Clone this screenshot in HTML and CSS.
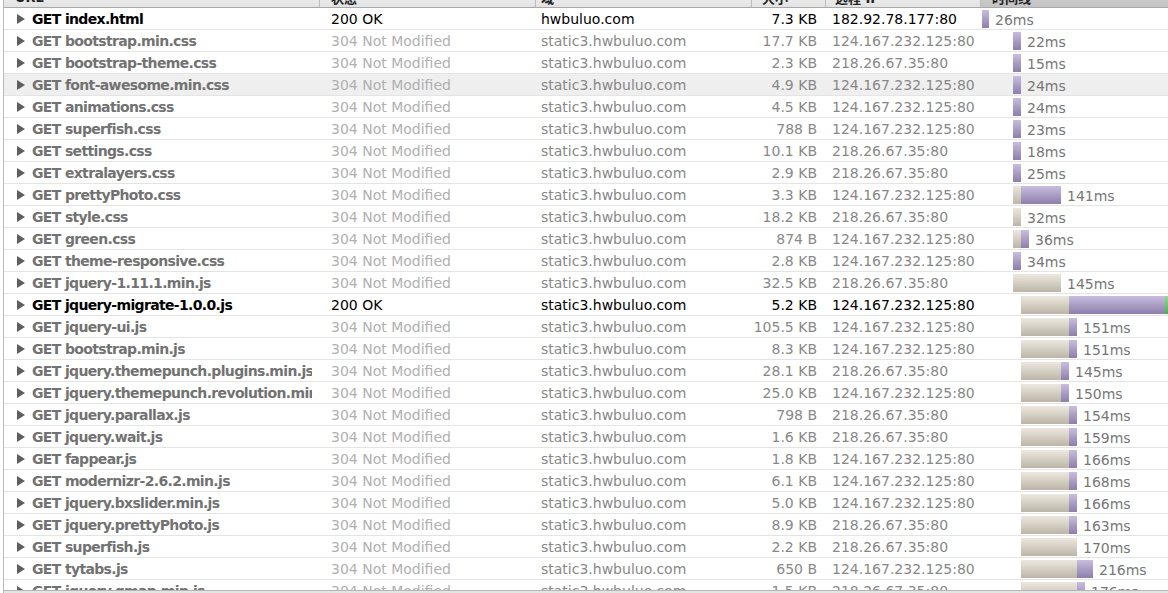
FILE: index.html
```html
<!DOCTYPE html>
<html lang="zh">
<head>
<meta charset="utf-8">
<title>网络</title>
<link rel="stylesheet" href="styles.css">
</head>
<body>
<div class="panel">
  <div class="head">
    <div class="hc h-url">URL</div>
    <div class="hc h-status">状态</div>
    <div class="hc h-domain">域</div>
    <div class="hc h-size">大小</div>
    <div class="hc h-ip">远程 IP</div>
    <div class="hc h-tl">时间线</div>
  </div>
  <div class="list">
    <div class="row main"><div class="url"><span class="tri"></span>GET index.html</div><div class="status">200 OK</div><div class="domain">hwbuluo.com</div><div class="size">7.3 KB</div><div class="ip">182.92.78.177:80</div><div class="tl"><span class="off" style="width:1px"></span><span class="bar p" style="width:7px"></span><span class="ms">26ms</span></div></div>
    <div class="row"><div class="url"><span class="tri"></span>GET bootstrap.min.css</div><div class="status">304 Not Modified</div><div class="domain">static3.hwbuluo.com</div><div class="size">17.7 KB</div><div class="ip">124.167.232.125:80</div><div class="tl"><span class="off" style="width:32px"></span><span class="bar p" style="width:8px"></span><span class="ms">22ms</span></div></div>
    <div class="row"><div class="url"><span class="tri"></span>GET bootstrap-theme.css</div><div class="status">304 Not Modified</div><div class="domain">static3.hwbuluo.com</div><div class="size">2.3 KB</div><div class="ip">218.26.67.35:80</div><div class="tl"><span class="off" style="width:32px"></span><span class="bar p" style="width:8px"></span><span class="ms">15ms</span></div></div>
    <div class="row hover"><div class="url"><span class="tri"></span>GET font-awesome.min.css</div><div class="status">304 Not Modified</div><div class="domain">static3.hwbuluo.com</div><div class="size">4.9 KB</div><div class="ip">124.167.232.125:80</div><div class="tl"><span class="off" style="width:32px"></span><span class="bar p" style="width:8px"></span><span class="ms">24ms</span></div></div>
    <div class="row"><div class="url"><span class="tri"></span>GET animations.css</div><div class="status">304 Not Modified</div><div class="domain">static3.hwbuluo.com</div><div class="size">4.5 KB</div><div class="ip">124.167.232.125:80</div><div class="tl"><span class="off" style="width:32px"></span><span class="bar p" style="width:8px"></span><span class="ms">24ms</span></div></div>
    <div class="row"><div class="url"><span class="tri"></span>GET superfish.css</div><div class="status">304 Not Modified</div><div class="domain">static3.hwbuluo.com</div><div class="size">788 B</div><div class="ip">124.167.232.125:80</div><div class="tl"><span class="off" style="width:32px"></span><span class="bar p" style="width:8px"></span><span class="ms">23ms</span></div></div>
    <div class="row"><div class="url"><span class="tri"></span>GET settings.css</div><div class="status">304 Not Modified</div><div class="domain">static3.hwbuluo.com</div><div class="size">10.1 KB</div><div class="ip">218.26.67.35:80</div><div class="tl"><span class="off" style="width:32px"></span><span class="bar p" style="width:8px"></span><span class="ms">18ms</span></div></div>
    <div class="row"><div class="url"><span class="tri"></span>GET extralayers.css</div><div class="status">304 Not Modified</div><div class="domain">static3.hwbuluo.com</div><div class="size">2.9 KB</div><div class="ip">218.26.67.35:80</div><div class="tl"><span class="off" style="width:32px"></span><span class="bar p" style="width:8px"></span><span class="ms">25ms</span></div></div>
    <div class="row"><div class="url"><span class="tri"></span>GET prettyPhoto.css</div><div class="status">304 Not Modified</div><div class="domain">static3.hwbuluo.com</div><div class="size">3.3 KB</div><div class="ip">124.167.232.125:80</div><div class="tl"><span class="off" style="width:32px"></span><span class="bar b" style="width:8px"></span><span class="bar p" style="width:40px"></span><span class="ms">141ms</span></div></div>
    <div class="row"><div class="url"><span class="tri"></span>GET style.css</div><div class="status">304 Not Modified</div><div class="domain">static3.hwbuluo.com</div><div class="size">18.2 KB</div><div class="ip">218.26.67.35:80</div><div class="tl"><span class="off" style="width:32px"></span><span class="bar b" style="width:8px"></span><span class="ms">32ms</span></div></div>
    <div class="row"><div class="url"><span class="tri"></span>GET green.css</div><div class="status">304 Not Modified</div><div class="domain">static3.hwbuluo.com</div><div class="size">874 B</div><div class="ip">124.167.232.125:80</div><div class="tl"><span class="off" style="width:32px"></span><span class="bar b" style="width:8px"></span><span class="bar p" style="width:8px"></span><span class="ms">36ms</span></div></div>
    <div class="row"><div class="url"><span class="tri"></span>GET theme-responsive.css</div><div class="status">304 Not Modified</div><div class="domain">static3.hwbuluo.com</div><div class="size">2.8 KB</div><div class="ip">124.167.232.125:80</div><div class="tl"><span class="off" style="width:32px"></span><span class="bar p" style="width:8px"></span><span class="ms">34ms</span></div></div>
    <div class="row"><div class="url"><span class="tri"></span>GET jquery-1.11.1.min.js</div><div class="status">304 Not Modified</div><div class="domain">static3.hwbuluo.com</div><div class="size">32.5 KB</div><div class="ip">218.26.67.35:80</div><div class="tl"><span class="off" style="width:32px"></span><span class="bar b" style="width:48px"></span><span class="ms">145ms</span></div></div>
    <div class="row main"><div class="url"><span class="tri"></span>GET jquery-migrate-1.0.0.js</div><div class="status">200 OK</div><div class="domain">static3.hwbuluo.com</div><div class="size">5.2 KB</div><div class="ip">124.167.232.125:80</div><div class="tl"><span class="off" style="width:40px"></span><span class="bar b" style="width:48px"></span><span class="bar p" style="width:96px"></span><span class="bar g" style="width:8px"></span></div></div>
    <div class="row"><div class="url"><span class="tri"></span>GET jquery-ui.js</div><div class="status">304 Not Modified</div><div class="domain">static3.hwbuluo.com</div><div class="size">105.5 KB</div><div class="ip">124.167.232.125:80</div><div class="tl"><span class="off" style="width:40px"></span><span class="bar b" style="width:48px"></span><span class="bar p" style="width:8px"></span><span class="ms">151ms</span></div></div>
    <div class="row"><div class="url"><span class="tri"></span>GET bootstrap.min.js</div><div class="status">304 Not Modified</div><div class="domain">static3.hwbuluo.com</div><div class="size">8.3 KB</div><div class="ip">124.167.232.125:80</div><div class="tl"><span class="off" style="width:40px"></span><span class="bar b" style="width:48px"></span><span class="bar p" style="width:8px"></span><span class="ms">151ms</span></div></div>
    <div class="row"><div class="url"><span class="tri"></span>GET jquery.themepunch.plugins.min.js</div><div class="status">304 Not Modified</div><div class="domain">static3.hwbuluo.com</div><div class="size">28.1 KB</div><div class="ip">218.26.67.35:80</div><div class="tl"><span class="off" style="width:40px"></span><span class="bar b" style="width:40px"></span><span class="bar p" style="width:8px"></span><span class="ms">145ms</span></div></div>
    <div class="row"><div class="url"><span class="tri"></span>GET jquery.themepunch.revolution.min.js</div><div class="status">304 Not Modified</div><div class="domain">static3.hwbuluo.com</div><div class="size">25.0 KB</div><div class="ip">124.167.232.125:80</div><div class="tl"><span class="off" style="width:40px"></span><span class="bar b" style="width:40px"></span><span class="bar p" style="width:8px"></span><span class="ms">150ms</span></div></div>
    <div class="row"><div class="url"><span class="tri"></span>GET jquery.parallax.js</div><div class="status">304 Not Modified</div><div class="domain">static3.hwbuluo.com</div><div class="size">798 B</div><div class="ip">218.26.67.35:80</div><div class="tl"><span class="off" style="width:40px"></span><span class="bar b" style="width:48px"></span><span class="bar p" style="width:8px"></span><span class="ms">154ms</span></div></div>
    <div class="row"><div class="url"><span class="tri"></span>GET jquery.wait.js</div><div class="status">304 Not Modified</div><div class="domain">static3.hwbuluo.com</div><div class="size">1.6 KB</div><div class="ip">218.26.67.35:80</div><div class="tl"><span class="off" style="width:40px"></span><span class="bar b" style="width:48px"></span><span class="bar p" style="width:8px"></span><span class="ms">159ms</span></div></div>
    <div class="row"><div class="url"><span class="tri"></span>GET fappear.js</div><div class="status">304 Not Modified</div><div class="domain">static3.hwbuluo.com</div><div class="size">1.8 KB</div><div class="ip">124.167.232.125:80</div><div class="tl"><span class="off" style="width:40px"></span><span class="bar b" style="width:48px"></span><span class="bar p" style="width:8px"></span><span class="ms">166ms</span></div></div>
    <div class="row"><div class="url"><span class="tri"></span>GET modernizr-2.6.2.min.js</div><div class="status">304 Not Modified</div><div class="domain">static3.hwbuluo.com</div><div class="size">6.1 KB</div><div class="ip">124.167.232.125:80</div><div class="tl"><span class="off" style="width:40px"></span><span class="bar b" style="width:48px"></span><span class="bar p" style="width:8px"></span><span class="ms">168ms</span></div></div>
    <div class="row"><div class="url"><span class="tri"></span>GET jquery.bxslider.min.js</div><div class="status">304 Not Modified</div><div class="domain">static3.hwbuluo.com</div><div class="size">5.0 KB</div><div class="ip">124.167.232.125:80</div><div class="tl"><span class="off" style="width:40px"></span><span class="bar b" style="width:48px"></span><span class="bar p" style="width:8px"></span><span class="ms">166ms</span></div></div>
    <div class="row"><div class="url"><span class="tri"></span>GET jquery.prettyPhoto.js</div><div class="status">304 Not Modified</div><div class="domain">static3.hwbuluo.com</div><div class="size">8.9 KB</div><div class="ip">218.26.67.35:80</div><div class="tl"><span class="off" style="width:40px"></span><span class="bar b" style="width:48px"></span><span class="bar p" style="width:8px"></span><span class="ms">163ms</span></div></div>
    <div class="row"><div class="url"><span class="tri"></span>GET superfish.js</div><div class="status">304 Not Modified</div><div class="domain">static3.hwbuluo.com</div><div class="size">2.2 KB</div><div class="ip">218.26.67.35:80</div><div class="tl"><span class="off" style="width:40px"></span><span class="bar b" style="width:56px"></span><span class="ms">170ms</span></div></div>
    <div class="row"><div class="url"><span class="tri"></span>GET tytabs.js</div><div class="status">304 Not Modified</div><div class="domain">static3.hwbuluo.com</div><div class="size">650 B</div><div class="ip">124.167.232.125:80</div><div class="tl"><span class="off" style="width:40px"></span><span class="bar b" style="width:56px"></span><span class="bar p" style="width:16px"></span><span class="ms">216ms</span></div></div>
    <div class="row"><div class="url"><span class="tri"></span>GET jquery.gmap.min.js</div><div class="status">304 Not Modified</div><div class="domain">static3.hwbuluo.com</div><div class="size">1.5 KB</div><div class="ip">218.26.67.35:80</div><div class="tl"><span class="off" style="width:40px"></span><span class="bar b" style="width:56px"></span><span class="bar p" style="width:8px"></span><span class="ms">176ms</span></div></div>
  </div>
  <div class="foot"></div>
</div>
</body>
</html>
```

FILE: styles.css
```css
html, body {
  margin: 0;
  padding: 0;
  background: #fff;
  overflow: hidden;
}

body {
  font-family: "DejaVu Sans", "Noto Sans CJK SC", sans-serif;
  font-size: 14px;
  color: #888;
}

.panel {
  display: flex;
  flex-direction: column;
  height: 607px;
  margin-top: -14px;
  margin-left: 3px;
  border-left: 1px solid #b9b9b9;
}

.head,
.row {
  display: grid;
  grid-template-columns: 316px 216px 216px 74px 155px 1fr;
}

.head {
  height: 21px;
  flex: none;
  border-bottom: 1px solid #a9a9a9;
  background: linear-gradient(#f4f4f4, #e3e3e3);
  font-size: 13px;
  font-weight: bold;
  color: #222;
}

.hc {
  display: flex;
  align-items: center;
  border-right: 1px solid #bdbdbd;
  white-space: nowrap;
  overflow: hidden;
  padding-top: 2px;
}

.h-url { padding-left: 11px; }
.h-status { padding-left: 11px; }
.h-domain { padding-left: 5px; }
.h-size { padding-left: 10px; }
.h-ip { padding-left: 9px; }
.h-tl {
  padding-left: 11px;
  border-right: none;
  background: linear-gradient(#d2d2d2, #c4c4c4);
}

.list {
  flex: 1;
  overflow: hidden;
}

.row {
  height: 22px;
  box-sizing: border-box;
  border-bottom: 1px solid #e4e4e4;
  align-items: center;
  white-space: nowrap;
}

.row.hover {
  background: #efefef;
}

.row > div {
  overflow: hidden;
}

.url {
  display: flex;
  align-items: center;
  padding-left: 13px;
  margin-right: 8px;
  font-weight: bold;
  letter-spacing: -0.65px;
  color: #727272;
}

.tri {
  flex: none;
  width: 0;
  height: 0;
  border-left: 8px solid #5e5e5e;
  border-top: 5px solid transparent;
  border-bottom: 5px solid transparent;
  margin-right: 7px;
}

.status {
  padding-left: 11px;
  color: #b0b0b0;
}

.domain {
  padding-left: 5px;
}

.size {
  text-align: right;
  padding-right: 9px;
}

.ip {
  padding-left: 6px;
}

.row.main .url,
.row.main .status,
.row.main .domain,
.row.main .size,
.row.main .ip {
  color: #000;
}

.tl {
  display: flex;
  align-items: center;
  height: 21px;
}

.off {
  flex: none;
}

.bar {
  flex: none;
  height: 18px;
}

.bar.b {
  background: linear-gradient(#ede8df, #bcb4a7);
}

.bar.p {
  background: linear-gradient(#c8bddf, #8d7eab);
}

.bar.g {
  background: linear-gradient(#8fe08f, #4caf50);
}

.ms {
  margin-left: 6px;
  padding-top: 2px;
  color: #777;
}

.foot {
  height: 2px;
  flex: none;
  border-top: 1px solid #b5b5b5;
  background: #e4e4e4;
}
```
